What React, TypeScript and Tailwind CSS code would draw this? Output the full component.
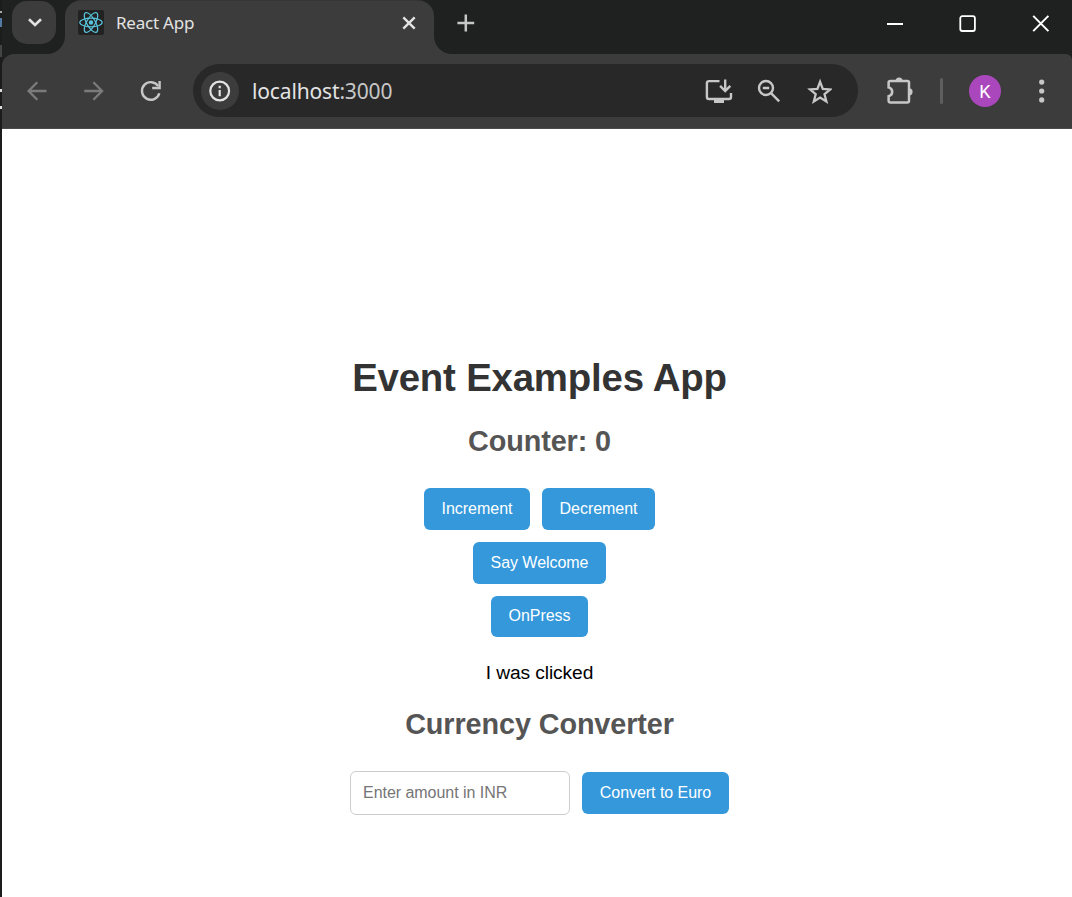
import { useState, type ReactNode } from "react";

const AppButton = ({ children, className, onClick }: { children: ReactNode; className: string; onClick?: () => void }) => (
  <button
    onClick={onClick}
    className={`flex items-center justify-center whitespace-nowrap rounded-[6px] bg-[#3498db] pb-px text-base tracking-[-0.04px] text-white ${className}`}
  >
    {children}
  </button>
);

const ReactLogo = () => (
  <svg width="26" height="25" viewBox="0 0 26 25" className="block rounded-[2px] bg-[#222]">
    <g fill="none" stroke="#58c4dc" strokeWidth="1.2" transform="translate(13 12.5)">
      <ellipse rx="11.2" ry="4.3" />
      <ellipse rx="11.2" ry="4.3" transform="rotate(60)" />
      <ellipse rx="11.2" ry="4.3" transform="rotate(120)" />
      <circle r="2.2" fill="#58c4dc" stroke="none" />
    </g>
  </svg>
);

const TabStrip = () => (
  <div className="flex h-[54px] bg-[#3c3c3c]">
    <div className="w-[63px] shrink-0 rounded-br-[18px] bg-[#1f2120] pl-[10px] pt-px">
      <div className="flex h-[43px] w-[44px] items-center justify-center rounded-[15px] bg-[#3c3c3c]">
        <svg width="14" height="9" viewBox="0 0 14 9" fill="none" stroke="#e3e3e3" strokeWidth="2.6" className="ml-px">
          <path d="M1 1.2 7 7l6-5.8" />
        </svg>
      </div>
    </div>
    <div className="w-[369px] shrink-0 bg-[#1f2120]">
      <div className="flex h-[54px] rounded-t-[16px] border-t border-[#343535] bg-[#3c3c3c]">
        <div className="ml-[13px] mt-[9px]">
          <ReactLogo />
        </div>
        <div className="ml-[12px] mt-[9px] w-[200px] whitespace-nowrap font-['Noto_Sans',sans-serif] text-[17px] leading-[25px] tracking-[-0.22px] text-[#e3e3e3]">
          React App
        </div>
        <svg width="14" height="14" viewBox="0 0 14 14" fill="none" stroke="#e3e3e3" strokeWidth="2.4" className="ml-[85.5px] mt-[15px]">
          <path d="m1.3 1.3 11.4 11.4m0-11.4L1.3 12.7" />
        </svg>
      </div>
    </div>
    <div className="flex flex-1 rounded-bl-[18px] bg-[#1f2120]">
      <svg width="18" height="18" viewBox="0 0 18 18" fill="none" stroke="#c7c7c7" strokeWidth="2.5" className="ml-[23px] mt-[14px]">
        <path d="M8.8.6v16.8M.4 9h16.8" />
      </svg>
      <div className="flex-1" />
      <svg width="164" height="18" viewBox="0 0 164 18" fill="none" stroke="#fff" strokeWidth="1.8" className="mr-[22px] mt-[15px]">
        <path d="M1 9h16" strokeWidth="2" />
        <rect x="74.3" y="1.2" width="14.6" height="14.8" rx="2" />
        <path d="m147.2.9 15.2 15.2m0-15.2-15.2 15.2" strokeWidth="2" />
      </svg>
    </div>
  </div>
);

const Toolbar = () => (
  <div className="bg-[#1f2120]">
    <div className="flex h-[75px] items-center rounded-tl-[12px] rounded-tr-[6px] border-b border-[#4b4b4b] bg-[#3c3c3c] pb-px">
      <svg width="138" height="24" viewBox="0 0 138 24" fill="none" className="ml-[23px]">
        <g stroke="#7b7b7b" strokeWidth="2.3">
          <path d="M21.5 12H3.8M12.3 3.3 3.6 12l8.7 8.7" />
          <path d="M59.2 12h17.7M68.4 3.3l8.7 8.7-8.7 8.7" />
        </g>
        <path d="M133.2 7.2A8.8 8.8 0 1 0 134.3 14.2" stroke="#c7c7c7" strokeWidth="2.4" />
        <path d="M127.2 10.2h8.6V2h-2.4v5.8h-6.2z" fill="#c7c7c7" />
      </svg>
      <div className="ml-[30px] flex h-[53px] w-[665px] shrink-0 items-center rounded-full bg-[#282828]">
        <div className="ml-[8px] flex size-[38px] shrink-0 items-center justify-center rounded-full bg-[#3c3c3c]">
          <svg width="22" height="22" viewBox="0 0 22 22" fill="none" stroke="#e3e3e3" strokeWidth="2.2">
            <circle cx="10.7" cy="11" r="9.4" />
            <path d="M10.7 10v6.2M10.7 5.8v2.4" />
          </svg>
        </div>
        <div className="ml-[13px] mt-px w-[200px] whitespace-nowrap font-['Noto_Sans',sans-serif] text-[21px] leading-[28px] tracking-[-0.15px] text-[#e3e3e3]">
          localhost<span className="text-[#c7c7c7]">:3000</span>
        </div>
        <svg width="128" height="28" viewBox="0 0 128 28" fill="none" stroke="#c7c7c7" strokeWidth="2.4" className="ml-[252px]">
          <path d="M15.5 4.1H5Q2.9 4.1 2.9 6v14Q2.9 22 5 22h20Q27 22 27 20v-4M21.2 2.5v11M16.1 8.8l5.1 5.2 5.1-5.2" />
          <path d="M10 22h10v4H10z" fill="#c7c7c7" stroke="none" />
          <circle cx="62" cy="11" r="7" />
          <path d="M58.8 11h6.4M67 16.2 75.2 24.4" />
          <path d="m116.1 4.8 2.7 7 7.4.6-5.7 4.8 1.9 7.3-6.3-3.9-6.3 3.9 1.9-7.3-5.7-4.8 7.4-.6z" strokeWidth="2.3" />
        </svg>
      </div>
      <svg width="30" height="30" viewBox="0 0 30 30" fill="none" className="ml-[27px]">
        <path
          d="M5.5 5H22.4q1.6 0 1.6 1.6V24.8q0 1.8-1.8 1.8H5.4Q3.6 26.6 3.6 24.8v-4.6q3.6-.9 3.6-4.4t-3.6-4.4V6.6Q3.6 5 5.5 5"
          stroke="#c7c7c7"
          strokeWidth="2.5"
        />
        <path d="M10.6 5a3.5 3.5 0 0 1 7 0zM24 12.2a3.6 3.6 0 0 1 0 7.2z" fill="#c7c7c7" />
      </svg>
      <div className="ml-[25px] h-[26px] w-[3px] rounded-full bg-[#5e5e5e]" />
      <div className="ml-[26px] mt-px flex size-8 items-center justify-center rounded-full bg-[#ab47bc] font-[Roboto,sans-serif] text-[18px] text-white">
        K
      </div>
      <svg width="6" height="24" viewBox="0 0 6 24" fill="#c7c7c7" className="ml-[38px]">
        <circle cx="2.7" cy="3.1" r="2.6" />
        <circle cx="2.7" cy="12" r="2.6" />
        <circle cx="2.7" cy="20.9" r="2.6" />
      </svg>
    </div>
  </div>
);

export default function App() {
  const [count, setCount] = useState(0);
  return (
    <div className="flex h-[897px] w-[1072px] overflow-hidden bg-white font-['Liberation_Sans',Arial,sans-serif]">
      <div className="w-[2px] shrink-0 bg-[#1c1c1c]">
        <div className="mt-[11px] h-[2px] bg-[#aaa]" />
        <div className="mt-[5px] h-[9px] bg-[#5479a5]" />
        <div className="mt-[18px] h-[12px] bg-[#444]" />
        <div className="mt-[32px] h-[3px] bg-[#ddd]" />
        <div className="mt-[14px] h-[3px] bg-[#ddd]" />
      </div>
      <div className="flex w-[1070px] flex-col">
        <TabStrip />
        <Toolbar />
        <main className="flex flex-col items-center pl-[5px] pt-[227px] text-black">
          <h1 className="text-[38.4px] font-bold leading-[44px] tracking-[-0.2px] text-[#333]">Event Examples App</h1>
          <h2 className="mt-[24px] text-[28.8px] font-bold leading-[34px] tracking-[-0.1px] text-[#555]">Counter: {count}</h2>
          <div className="mt-[30px] flex gap-[12px]">
            <AppButton className="h-[42px] w-[106px]" onClick={() => setCount(count + 1)}>Increment</AppButton>
            <AppButton className="h-[42px] w-[113px]" onClick={() => setCount(count - 1)}>Decrement</AppButton>
          </div>
          <AppButton className="mt-[12px] h-[42px] w-[133px]">Say Welcome</AppButton>
          <AppButton className="mt-[12px] h-[41px] w-[97px]">OnPress</AppButton>
          <p className="mt-[25px] text-[19.2px] leading-[22px] tracking-[-0.1px]">I was clicked</p>
          <h2 className="mt-[23px] text-[28.8px] font-bold leading-[34px] tracking-[-0.1px] text-[#555]">Currency Converter</h2>
          <div className="mt-[30px] flex items-center gap-[12px]">
            <input
              className="h-[44px] w-[220px] rounded-[6px] border border-[#ccc] bg-white px-[12px] pb-px text-base tracking-[-0.04px] outline-none placeholder:text-[#757575]"
              placeholder="Enter amount in INR"
            />
            <AppButton className="h-[42px] w-[147px]">Convert to Euro</AppButton>
          </div>
        </main>
      </div>
    </div>
  );
}
